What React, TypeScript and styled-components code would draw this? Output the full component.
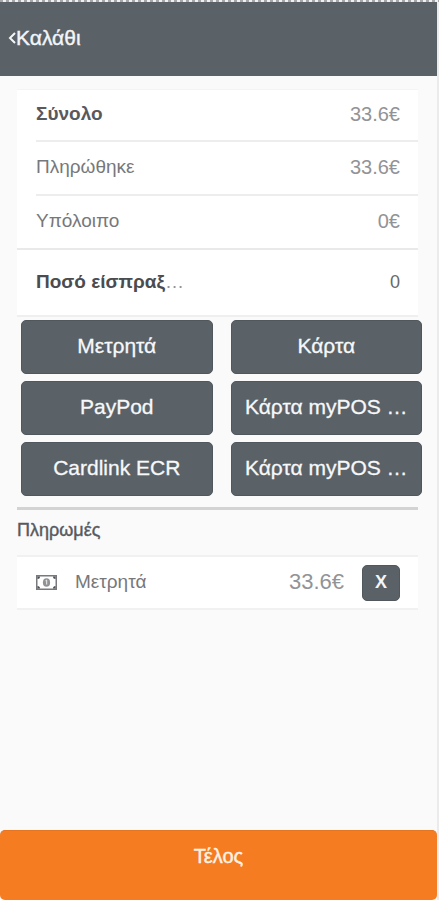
import React from "react";
import styled, { createGlobalStyle } from "styled-components";

const slate = "#5a6268";

const GlobalStyle = createGlobalStyle`
  *, *::before, *::after { box-sizing: border-box; }
  body {
    margin: 0;
    background: #fafafa;
    font-family: "Liberation Sans", Arial, sans-serif;
    color: #77787b;
  }
  button, input { font-family: inherit; }
`;

const Screen = styled.div`
  display: flex;
  flex-direction: column;
  min-height: 100vh;
  border-right: 2px solid #ebebeb;
`;

const TopEdge = styled.div`
  height: 2px;
  margin-right: -2px;
  background: repeating-linear-gradient(90deg, #a5a7a9 0 3px, #f0f0f0 3px 6px);
`;

const Header = styled.header`
  display: flex;
  align-items: center;
  height: 74px;
  padding: 0 8px 2px;
  background: ${slate};
`;

const BackButton = styled.button`
  display: flex;
  align-items: center;
  padding: 0;
  border: 0;
  background: none;
  color: #f4f5f6;
  font-size: 21px;
  line-height: 24px;
  -webkit-text-stroke: 0.4px currentColor;
  cursor: pointer;

  svg { display: block; }
`;

const Content = styled.main`
  flex: 1;
  padding: 13px 19px 0 17px;
`;

const Card = styled.section`
  background: #fff;
  border-top: 1px solid #f4f4f4;
  border-bottom: 2px solid #e9e9eb;
`;

const SummaryRow = styled.div`
  display: flex;
  justify-content: space-between;
  align-items: center;
  height: 54px;
  margin-left: 19px;
  padding: 0 18px 2px 0;
  font-size: 19px;
  line-height: 24px;

  &:first-child { height: 50px; }
  & + & { border-top: 2px solid #ededee; }
`;

const Label = styled.span<{ $strong?: boolean }>`
  color: ${(p) => (p.$strong ? "#58595c" : "#77787b")};
  font-weight: ${(p) => (p.$strong ? 700 : 400)};
`;

const Amount = styled.span`
  color: #929396;
  font-size: 20px;
`;

const AmountField = styled.div`
  display: flex;
  align-items: center;
  justify-content: space-between;
  height: 67px;
  padding: 0 18px 0 19px;
  background: #fff;
  border-bottom: 2px solid #efeff1;
`;

const FieldLabel = styled.label`
  flex: none;
  padding-bottom: 2px;
  white-space: nowrap;
  color: #929396;
  font-size: 19px;
  line-height: 28px;

  span { color: #4b4c4f; font-weight: 700; }
`;

const FieldInput = styled.input`
  flex: 1;
  min-width: 0;
  padding: 0;
  border: 0;
  background: none;
  color: #68696c;
  font-size: 18px;
  text-align: right;
`;

const MethodGrid = styled.div`
  display: grid;
  grid-template-columns: 1fr 1fr;
  gap: 7px 18px;
  margin: 3px -4px 0 4px;
`;

const MethodButton = styled.button`
  height: 54px;
  min-width: 0;
  padding: 0 12px 2px;
  border: 1px solid #50585e;
  border-radius: 5px;
  background: ${slate};
  color: #f7f8f9;
  font-size: 21px;
  line-height: 24px;
  -webkit-text-stroke: 0.3px currentColor;
  white-space: nowrap;
  cursor: pointer;
`;

const Divider = styled.hr`
  height: 3px;
  margin: 11px 0 0;
  border: 0;
  background: #d2d3d4;
`;

const SectionTitle = styled.h2`
  margin: 10px 0 14px;
  color: #58595c;
  font-size: 18px;
  font-weight: 400;
  line-height: 21px;
  -webkit-text-stroke: 0.4px currentColor;
`;

const PaymentList = styled.ul`
  margin: 0;
  padding: 0;
  list-style: none;
`;

const PaymentRow = styled.li`
  display: flex;
  align-items: center;
  height: 55px;
  padding: 0 18px 0 19px;
  background: #fff;
  border-top: 2px solid #f1f1f1;
  border-bottom: 2px solid #f1f1f1;
  font-size: 19px;
  line-height: 24px;
`;

const PaymentName = styled.span`
  flex: 1;
  margin-left: 18px;
  padding-bottom: 2px;
`;

const PaymentAmount = styled(Amount)`
  padding-bottom: 2px;
  font-size: 22px;
`;

const RemoveButton = styled.button`
  width: 38px;
  height: 36px;
  margin-left: 18px;
  padding: 0;
  border: 1px solid #50585e;
  border-radius: 5px;
  background: ${slate};
  color: #f4f5f6;
  font-size: 18px;
  font-weight: 700;
  cursor: pointer;
`;

const FinishButton = styled.button`
  height: 70px;
  padding: 0 0 20px;
  border: 0;
  border-top: 1px solid #e77420;
  border-radius: 5px;
  background: #f57c20;
  color: #fff3e6;
  font-size: 20px;
  line-height: 24px;
  -webkit-text-stroke: 0.4px currentColor;
  cursor: pointer;
`;

function BanknoteIcon() {
  return (
    <svg width="21" height="15" viewBox="0 0 21 15" aria-hidden="true">
      <rect x="0.75" y="0.75" width="19.5" height="13.5" fill="#fff" stroke="#77797c" strokeWidth="1.5" />
      <path d="M1.500 1.500h2.500a2.500 2.500 0 0 1-2.500 2.500zM19.500 1.500v2.500a2.500 2.500 0 0 1-2.500-2.500zM1.500 13.500v-2.500a2.500 2.500 0 0 1 2.500 2.500zM19.500 13.500h-2.500a2.500 2.500 0 0 1 2.500-2.500z" fill="#4b4d50" />
      <ellipse cx="10.5" cy="7.5" rx="3.6" ry="4.3" fill="#909295" />
      <path d="M9.500 5.800l1.200-.7v4.400" fill="none" stroke="#f0f0f0" strokeWidth="1" />
    </svg>
  );
}

const summary = [
  { label: "Σύνολο", amount: "33.6€", strong: true },
  { label: "Πληρώθηκε", amount: "33.6€" },
  { label: "Υπόλοιπο", amount: "0€" },
];

const methods = [
  "Μετρητά",
  "Κάρτα",
  "PayPod",
  "Κάρτα myPOS …",
  "Cardlink ECR",
  "Κάρτα myPOS …",
];

export default function App() {
  return (
    <>
      <GlobalStyle />
      <Screen>
        <TopEdge />
        <Header>
          <BackButton type="button">
            <svg width="8" height="14" viewBox="0 0 8 14" aria-hidden="true">
              <path d="M7 2L2 7l5 5" fill="none" stroke="currentColor" strokeWidth="2" />
            </svg>
            Καλάθι
          </BackButton>
        </Header>
        <Content>
          <Card>
            {summary.map((row) => (
              <SummaryRow key={row.label}>
                <Label $strong={row.strong}>{row.label}</Label>
                <Amount>{row.amount}</Amount>
              </SummaryRow>
            ))}
          </Card>
          <AmountField>
            <FieldLabel htmlFor="amount"><span>Ποσό είσπραξ</span>…</FieldLabel>
            <FieldInput id="amount" inputMode="decimal" defaultValue="0" />
          </AmountField>
          <MethodGrid>
            {methods.map((name, i) => (
              <MethodButton key={i} type="button">{name}</MethodButton>
            ))}
          </MethodGrid>
          <Divider />
          <SectionTitle>Πληρωμές</SectionTitle>
          <PaymentList>
            <PaymentRow>
              <BanknoteIcon />
              <PaymentName>Μετρητά</PaymentName>
              <PaymentAmount>33.6€</PaymentAmount>
              <RemoveButton type="button">X</RemoveButton>
            </PaymentRow>
          </PaymentList>
        </Content>
        <FinishButton type="button">Τέλος</FinishButton>
      </Screen>
    </>
  );
}
